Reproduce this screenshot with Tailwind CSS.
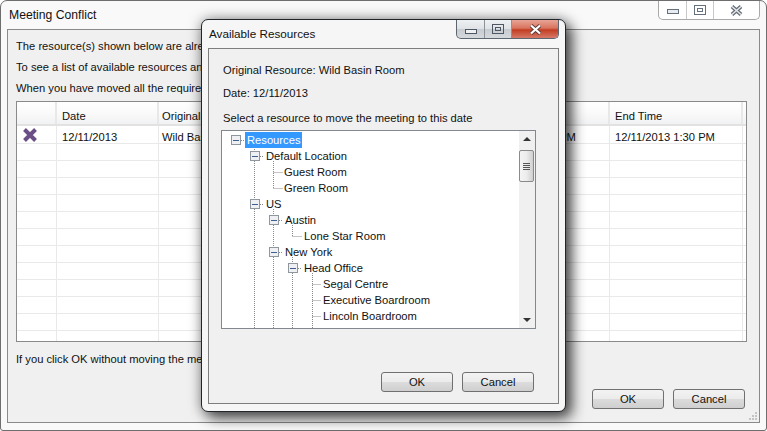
<!DOCTYPE html>
<html lang="en">
<head>
    <meta charset="UTF-8">
    <title>Meeting Conflict</title>
    <script src="https://cdn.jsdelivr.net/npm/@tailwindcss/browser@4"></script>
</head>
<body class="bg-white">
    <div class="relative w-[767px] h-[431px] overflow-hidden font-['Liberation_Sans',Arial,sans-serif] text-[11.2px] text-[#111]">

        <!-- Main window -->
        <div class="w-[767px] h-[431px] flex flex-col bg-[#f9f9f9] border border-[#6e6e6e] rounded-t-[7px] rounded-b-[3px] px-[6px] pb-[7px]">
            <div class="h-[28px] shrink-0 flex justify-between items-start">
                <span class="text-[12.2px] pl-[2px] pt-[6px] leading-[16px]">Meeting Conflict</span>
                <div class="flex w-[102px] h-[19px] border border-t-0 border-[#a8a8a8] rounded-b-[5px] bg-white">
                    <div class="w-[28px] flex items-center justify-center border-r border-[#c8c8c8]">
                        <div class="w-[12px] h-[5px] mt-[3px] border border-[#66707c] bg-[#e8ecf0]"></div>
                    </div>
                    <div class="w-[27px] flex items-center justify-center border-r border-[#c8c8c8]">
                        <div class="w-[12px] h-[10px] border border-[#66707c] flex items-center justify-center"><div class="w-[6px] h-[4px] border border-[#66707c]"></div></div>
                    </div>
                    <div class="flex-1 flex items-center justify-center">
                        <svg width="13" height="11" viewBox="0 0 13 11"><path d="M2 1.5 L11 9.5 M11 1.5 L2 9.5" stroke="#5f6a76" stroke-width="3.8"/><path d="M2 1.5 L11 9.5 M11 1.5 L2 9.5" stroke="#e6e6e6" stroke-width="1.6"/></svg>
                    </div>
                </div>
            </div>
            <div class="relative flex-1 flex flex-col bg-[#f0f0f0] border border-[#8a8a8a] px-[8px] pt-[9px]">
                <p class="h-[21px] leading-[15px]">The resource(s) shown below are alre</p>
                <p class="h-[21px] leading-[15px]">To see a list of available resources an</p>
                <p class="h-[21px] leading-[15px]">When you have moved all the required</p>

                <!-- Conflict grid -->
                <div class="w-[731px] h-[241px] -mt-[1px] border border-[#8a8a8a] bg-white overflow-hidden">
                    <div class="flex h-[24px] border-b-2 border-[#e2e2e2] bg-[linear-gradient(#ffffff_0%,#fafafa_50%,#f1f2f3_100%)] leading-[29px]">
                        <div class="w-[40px] border-r-2 border-[#e8e8e8]"></div>
                        <div class="w-[102px] pl-[5px] border-r-2 border-[#e8e8e8]">Date</div>
                        <div class="w-[312px] pl-[3px] border-r-2 border-[#e8e8e8]">Original</div>
                        <div class="w-[139px] border-r-2 border-[#e8e8e8]"></div>
                        <div class="w-[133px] pl-[5px] border-r-2 border-[#e8e8e8]">End Time</div>
                    </div>
                    <div class="flex h-[18px] border-b border-[#e9e9e9] leading-[23px]">
                        <div class="w-[40px] border-r border-[#e9e9e9] flex items-center pl-[5px] pt-[1px]">
                            <svg width="16" height="16" viewBox="0 0 16 16"><path d="M2.5 2.5 L13.5 13.5 M13.5 2.5 L2.5 13.5" stroke="#6b4e86" stroke-width="4"/></svg>
                        </div>
                        <div class="w-[102px] pl-[5px] border-r border-[#e9e9e9]">12/11/2013</div>
                        <div class="w-[312px] pl-[3px] border-r border-[#e9e9e9]">Wild Basin Room</div>
                        <div class="w-[139px] pl-[5px] border-r border-[#e9e9e9]">12/11/2013 1:00 PM</div>
                        <div class="w-[133px] pl-[5px] border-r border-[#e9e9e9]">12/11/2013 1:30 PM</div>
                    </div>
                    <div class="h-[200px] bg-[repeating-linear-gradient(#ffffff_0px,#ffffff_16px,#e9e9e9_16px,#e9e9e9_17px)] flex">
                        <div class="w-[40px] border-r border-[#e9e9e9]"></div>
                        <div class="w-[102px] border-r border-[#e9e9e9]"></div>
                        <div class="w-[312px] border-r border-[#e9e9e9]"></div>
                        <div class="w-[139px] border-r border-[#e9e9e9]"></div>
                        <div class="w-[133px] border-r border-[#e9e9e9]"></div>
                    </div>
                </div>

                <p class="mt-[10px] leading-[15px]">If you click OK without moving the me</p>

                <div class="flex justify-end gap-[9px] mt-[22px] pr-[6px]">
                    <button class="w-[72px] h-[20px] border border-[#707070] rounded-[3px] bg-[linear-gradient(#f3f3f3_0%,#ebebeb_50%,#dcdcdc_50%,#cfcfcf_100%)]">OK</button>
                    <button class="w-[72px] h-[20px] border border-[#707070] rounded-[3px] bg-[linear-gradient(#f3f3f3_0%,#ebebeb_50%,#dcdcdc_50%,#cfcfcf_100%)]">Cancel</button>
                </div>

                <!-- Resize grip -->
                <svg class="absolute right-[1px] bottom-[1px]" width="9" height="9" viewBox="0 0 9 9" fill="#c4c4c4">
                    <rect x="6" y="0" width="2" height="2"/>
                    <rect x="3" y="3" width="2" height="2"/><rect x="6" y="3" width="2" height="2"/>
                    <rect x="0" y="6" width="2" height="2"/><rect x="3" y="6" width="2" height="2"/><rect x="6" y="6" width="2" height="2"/>
                </svg>
            </div>
        </div>

        <!-- Available Resources dialog -->
        <div class="absolute left-[201px] top-[19px] w-[365px] h-[393px] flex flex-col px-[6px] pb-[7px] bg-[#f6f6f6] border border-[#20262c] rounded-[7px] shadow-[6px_6px_14px_rgba(0,0,0,0.65),0_0_14px_rgba(0,0,0,0.35)]">
            <div class="h-[28px] shrink-0 flex justify-between items-start">
                <span class="text-[11.7px] pl-[1px] pt-[6px] leading-[16px]">Available Resources</span>
                <div class="flex w-[103px] h-[19px] border border-t-0 border-[#5c6670] rounded-b-[5px] overflow-hidden bg-[linear-gradient(#eef0f2_0%,#dfe2e6_50%,#c6cbd0_50%,#d6d9dc_100%)]">
                    <div class="w-[28px] flex items-center justify-center border-r border-[#8b929a]">
                        <div class="w-[12px] h-[5px] mt-[4px] border border-[#4e5864] bg-[#eef0f2]"></div>
                    </div>
                    <div class="w-[27px] flex items-center justify-center border-r border-[#8b929a]">
                        <div class="w-[12px] h-[10px] border border-[#4e5864] flex items-center justify-center"><div class="w-[6px] h-[4px] border border-[#4e5864]"></div></div>
                    </div>
                    <div class="flex-1 flex items-center justify-center bg-[linear-gradient(#e8a596_0%,#d9735f_45%,#c23d22_55%,#d67a68_100%)]">
                        <svg width="15" height="11" viewBox="0 0 15 11"><path d="M3 1.5 L12 9.5 M12 1.5 L3 9.5" stroke="#5a3a36" stroke-width="3.8"/><path d="M3 1.5 L12 9.5 M12 1.5 L3 9.5" stroke="#ffffff" stroke-width="2.2"/></svg>
                    </div>
                </div>
            </div>
            <div class="flex-1 flex flex-col bg-[#f0f0f0] border border-[#7e7e7e] pl-[14px] pt-[14px]">
                <p class="h-[23px] leading-[15px]">Original Resource: Wild Basin Room</p>
                <p class="h-[26px] leading-[15px]">Date: 12/11/2013</p>
                <p class="h-[12px] leading-[12px]">Select a resource to move the meeting to this date</p>

                <!-- Resource tree -->
                <div class="relative flex w-[315px] h-[199px] mt-[6px] -ml-[2px] border border-[#828790] bg-white overflow-hidden">
                    <svg class="absolute left-0 top-0" width="297" height="197" viewBox="222 131 297 197">
                        <g stroke="#8a8a8a" stroke-dasharray="1 1" fill="none">
                            <path d="M241 140.5H245 M254.5 145V328 M260 156.5H264 M273.5 161V188.5 M273.5 172.5H283 M273.5 188.5H283 M260 204.5H264 M273.5 209V328 M279 220.5H283 M292.5 225V236.5 M292.5 236.5H302 M279 252.5H283 M292.5 257V328 M298 268.5H302 M312.5 273V328 M312.5 284.5H321 M312.5 300.5H321 M312.5 316.5H321"/>
                        </g>
                        <g fill="#eef0f3" stroke="#8f969e">
                            <rect x="231.5" y="135.5" width="9" height="9"/>
                            <rect x="250.5" y="151.5" width="9" height="9"/>
                            <rect x="250.5" y="199.5" width="9" height="9"/>
                            <rect x="269.5" y="215.5" width="9" height="9"/>
                            <rect x="269.5" y="247.5" width="9" height="9"/>
                            <rect x="288.5" y="263.5" width="9" height="9"/>
                        </g>
                        <path d="M233 140.5H239 M252 156.5H258 M252 204.5H258 M271 220.5H277 M271 252.5H277 M290 268.5H296" stroke="#3f5f8f"/>
                    </svg>
                    <ul class="relative flex-1 pt-[1px] leading-[16px] whitespace-nowrap overflow-hidden">
                        <li class="pl-[23px] h-[16px]"><span class="inline-block px-[2px] bg-[#3399ff] text-white">Resources</span></li>
                        <li class="pl-[44px] h-[16px]">Default Location</li>
                        <li class="pl-[62px] h-[16px]">Guest Room</li>
                        <li class="pl-[62px] h-[16px]">Green Room</li>
                        <li class="pl-[44px] h-[16px]">US</li>
                        <li class="pl-[63px] h-[16px]">Austin</li>
                        <li class="pl-[82px] h-[16px]">Lone Star Room</li>
                        <li class="pl-[63px] h-[16px]">New York</li>
                        <li class="pl-[82px] h-[16px]">Head Office</li>
                        <li class="pl-[101px] h-[16px]">Segal Centre</li>
                        <li class="pl-[101px] h-[16px]">Executive Boardroom</li>
                        <li class="pl-[101px] h-[16px]">Lincoln Boardroom</li>
                    </ul>
                    <div class="w-[16px] shrink-0 flex flex-col items-center justify-between bg-[#f0f0f0] py-[6px] relative">
                        <div class="w-0 h-0 border-x-[4px] border-x-transparent border-b-[4px] border-b-[#333]"></div>
                        <div class="absolute left-[0px] top-[19px] w-[15px] h-[32px] border border-[#8a8a8a] rounded-[2px] bg-[linear-gradient(90deg,#f4f4f4_0%,#ececec_50%,#cfcfcf_100%)] flex flex-col items-center justify-center gap-[1px]">
                            <div class="w-[7px] h-[1px] bg-[#555]"></div>
                            <div class="w-[7px] h-[1px] bg-[#555]"></div>
                            <div class="w-[7px] h-[1px] bg-[#555]"></div>
                            <div class="w-[7px] h-[1px] bg-[#555]"></div>
                        </div>
                        <div class="w-0 h-0 border-x-[4px] border-x-transparent border-t-[4px] border-t-[#333]"></div>
                    </div>
                </div>

                <div class="flex justify-end gap-[9px] mt-[43px] pr-[24px]">
                    <button class="w-[72px] h-[20px] border border-[#707070] rounded-[3px] bg-[linear-gradient(#f3f3f3_0%,#ebebeb_50%,#dcdcdc_50%,#cfcfcf_100%)]">OK</button>
                    <button class="w-[72px] h-[20px] border border-[#707070] rounded-[3px] bg-[linear-gradient(#f3f3f3_0%,#ebebeb_50%,#dcdcdc_50%,#cfcfcf_100%)]">Cancel</button>
                </div>
            </div>
        </div>
    </div>
</body>
</html>
